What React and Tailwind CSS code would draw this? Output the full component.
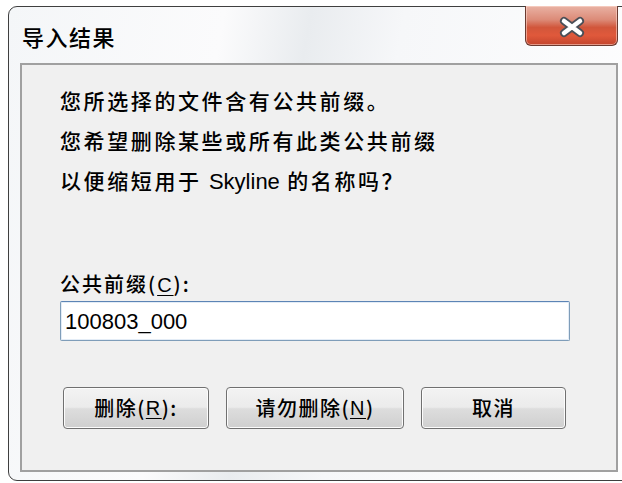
import React from "react";

const cjk = { fontFamily: '"Noto Sans CJK SC", "Noto Sans", sans-serif' };
const latin = { fontFamily: '"Liberation Sans", Arial, sans-serif' };

function Mnemonic({ children }) {
    return <span className="underline underline-offset-[3px] decoration-1" style={latin}>{children}</span>;
}

function DialogButton({ width, children }) {
    return (
        <button
            className={`h-[42px] ${width} rounded-[4px] border border-[#707070] text-[20px] font-medium text-black flex items-center justify-center tracking-[1.5px] shadow-[inset_0_0_0_1px_#fcfcfc] bg-[linear-gradient(#f3f3f3_0%,#ebebeb_48%,#dddddd_52%,#cfcfcf_100%)]`}
            style={cjk}
        >
            {children}
        </button>
    );
}

function CloseButton() {
    return (
        <div className="absolute left-[516px] top-[-1px] w-[93px] h-[40px] rounded-b-[6px] border border-t-0 border-[#6b3a30] shadow-[inset_0_0_0_1px_rgba(255,220,210,0.55)] bg-[linear-gradient(#e9b2a4_0%,#dc8b78_35%,#d1563b_55%,#e0593b_75%,#c3452d_100%)] flex items-center justify-center">
            <svg width="28" height="22" viewBox="0 0 28 22" className="mt-[2px]">
                <path d="M6 5 L22 17 M22 5 L6 17" stroke="#4a4f57" strokeWidth="8" strokeLinecap="round" />
                <path d="M6 5 L22 17 M22 5 L6 17" stroke="#ffffff" strokeWidth="4.5" strokeLinecap="round" />
            </svg>
        </div>
    );
}

export default function App() {
    return (
        <div className="w-[622px] h-[483px] bg-white overflow-hidden">
            <div className="relative ml-[8px] mt-[6px] w-[640px] h-[475px] rounded-tl-[9px] rounded-bl-[9px] border border-[#3f3f3f] bg-[linear-gradient(100deg,#f4f6f8_0%,#fbfbfc_30%,#e9ecef_42%,#f6f7f9_55%,#ffffff_100%)]">
                <CloseButton />
                <div className="h-[56px] pl-[13px] flex items-center">
                    <span className="text-[22px] font-medium text-black tracking-[1.5px] pt-[3px]" style={cjk}>导入结果</span>
                </div>
                <div className="ml-[11px] w-[598px] h-[409px] border-2 border-[#a0a0a0] bg-[#f0f0f0] pl-[38px] pt-[15px]" style={cjk}>
                    <div className="text-[21px] font-medium leading-[40px] tracking-[2.6px] text-black">
                        <p>您所选择的文件含有公共前缀。</p>
                        <p>您希望删除某些或所有此类公共前缀</p>
                        <p>
                            以便缩短用于 <span className="tracking-normal font-normal text-[22px]" style={latin}>Skyline</span> 的名称吗？
                        </p>
                    </div>
                    <p className="mt-[70px] text-[20px] font-medium leading-[24px] tracking-[2px] text-black">
                        公共前缀(<Mnemonic>C</Mnemonic>):
                    </p>
                    <div className="mt-[4px] w-[510px] h-[40px] bg-white border border-[#7f9db9] border-t-[#5c84b5] rounded-[2px] shadow-[inset_0_0_0_1px_#e3ecf6] flex items-center pl-[4px]">
                        <span className="text-[22px] text-black" style={latin}>100803_000</span>
                    </div>
                    <div className="mt-[46px] ml-[3px] flex gap-[17px]">
                        <DialogButton width="w-[146px]">
                            删除(<Mnemonic>R</Mnemonic>):
                        </DialogButton>
                        <DialogButton width="w-[178px]">
                            请勿删除(<Mnemonic>N</Mnemonic>)
                        </DialogButton>
                        <DialogButton width="w-[145px]">取消</DialogButton>
                    </div>
                </div>
            </div>
        </div>
    );
}
